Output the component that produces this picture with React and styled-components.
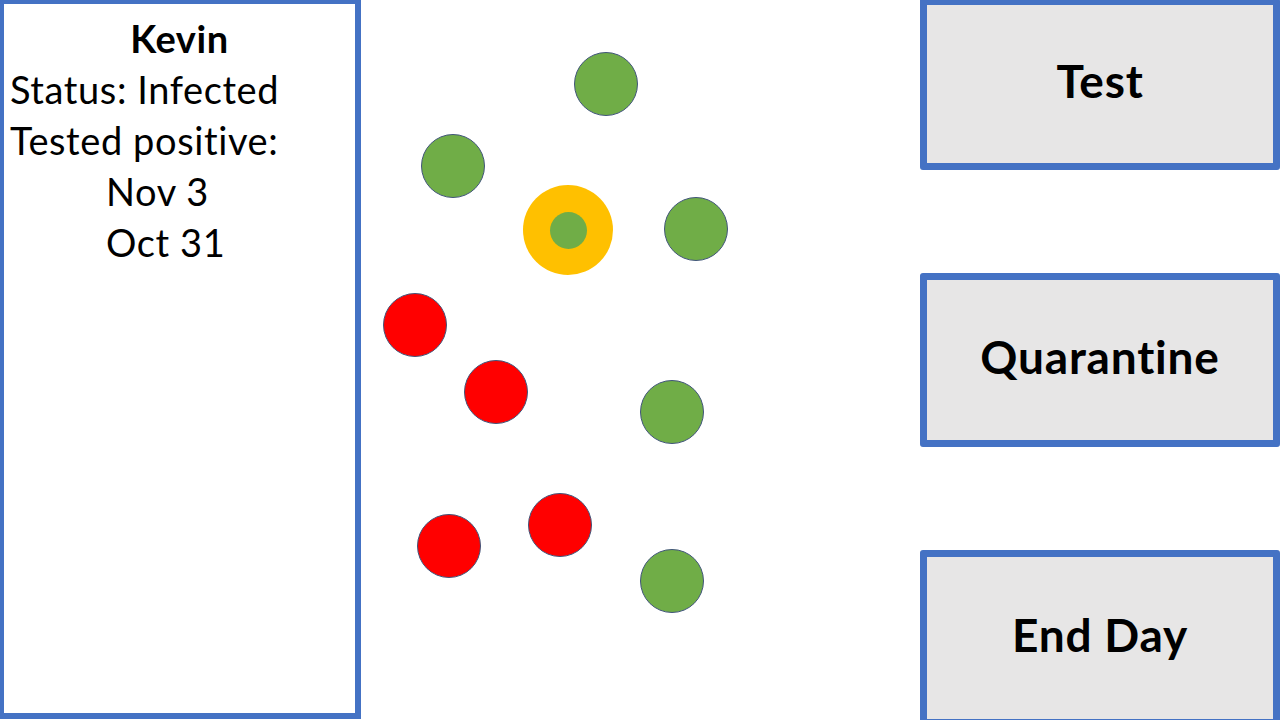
import React from 'react';
import styled, { createGlobalStyle } from 'styled-components';

const blue = '#4472C4';

const GlobalStyle = createGlobalStyle`
  html, body {
    margin: 0;
    padding: 0;
    background: #ffffff;
    overflow: hidden;
  }
  * {
    box-sizing: border-box;
  }
`;

const Page = styled.div`
  display: flex;
  width: 1280px;
  height: 720px;
  overflow: hidden;
  font-family: Lato, "Open Sans", sans-serif;
  color: #000;
`;

const InfoPanel = styled.div`
  flex: none;
  width: 363px;
  height: 721px;
  margin: -2px 0 0 -2px;
  border: 6px solid ${blue};
  padding: 9px 0 0 6px;
  font-size: 38px;
  line-height: 51px;
  letter-spacing: 0.6px;
`;

const Line = styled.div`
  white-space: nowrap;
  text-align: ${props => (props.center ? 'center' : 'left')};
  font-weight: ${props => (props.bold ? 700 : 400)};
  padding-left: ${props => props.indent || 0}px;
  padding-right: ${props => (props.center ? 6 : 0)}px;
`;

const Board = styled.div`
  flex: 1;
  position: relative;
`;

const Dot = styled.div`
  position: absolute;
  width: 64px;
  height: 64px;
  border-radius: 50%;
  background: ${props => (props.sick ? '#FF0000' : '#70AD47')};
  border: 1px solid #41557a;
`;

const Ring = styled.div`
  position: absolute;
  width: 90px;
  height: 90px;
  border-radius: 50%;
  background: #FFC000;
  display: flex;
  align-items: center;
  justify-content: center;
`;

const RingCore = styled.div`
  width: 37px;
  height: 37px;
  border-radius: 50%;
  background: #70AD47;
`;

const Actions = styled.div`
  flex: none;
  width: 360px;
  margin-top: -2px;
  display: flex;
  flex-direction: column;
  gap: 103px;
`;

const ActionButton = styled.button`
  flex: none;
  height: ${props => props.h}px;
  width: 100%;
  margin: 0;
  padding: 0 0 8px;
  background: #E7E6E6;
  border: 7px solid ${blue};
  border-radius: 3px;
  font-family: Lato, "Open Sans", sans-serif;
  font-weight: 700;
  font-size: 46px;
  letter-spacing: 0.8px;
  color: #000;
  display: flex;
  align-items: center;
  justify-content: center;
`;

// page x of the board's left edge is 361
const OX = 361;
const people = [
  { x: 606, y: 84, sick: false },
  { x: 453, y: 166, sick: false },
  { x: 696, y: 229, sick: false },
  { x: 415, y: 325, sick: true },
  { x: 496, y: 392, sick: true },
  { x: 672, y: 412, sick: false },
  { x: 449, y: 546, sick: true },
  { x: 560, y: 525, sick: true },
  { x: 672, y: 581, sick: false },
];

const App = () => {
  return (
    <Page>
      <GlobalStyle />
      <InfoPanel>
        <Line center bold>Kevin</Line>
        <Line>Status: Infected</Line>
        <Line>Tested positive:</Line>
        <Line indent={96}>Nov 3</Line>
        <Line indent={96}>Oct 31</Line>
      </InfoPanel>

      <Board>
        {people.map((p, i) => (
          <Dot key={i} sick={p.sick} style={{ left: p.x - OX - 32, top: p.y - 32 }} />
        ))}
        <Ring style={{ left: 568 - OX - 45, top: 230 - 45 }}>
          <RingCore />
        </Ring>
      </Board>

      <Actions>
        <ActionButton h={172}>Test</ActionButton>
        <ActionButton h={174}>Quarantine</ActionButton>
        <ActionButton h={176}>End Day</ActionButton>
      </Actions>
    </Page>
  );
};

export default App;
